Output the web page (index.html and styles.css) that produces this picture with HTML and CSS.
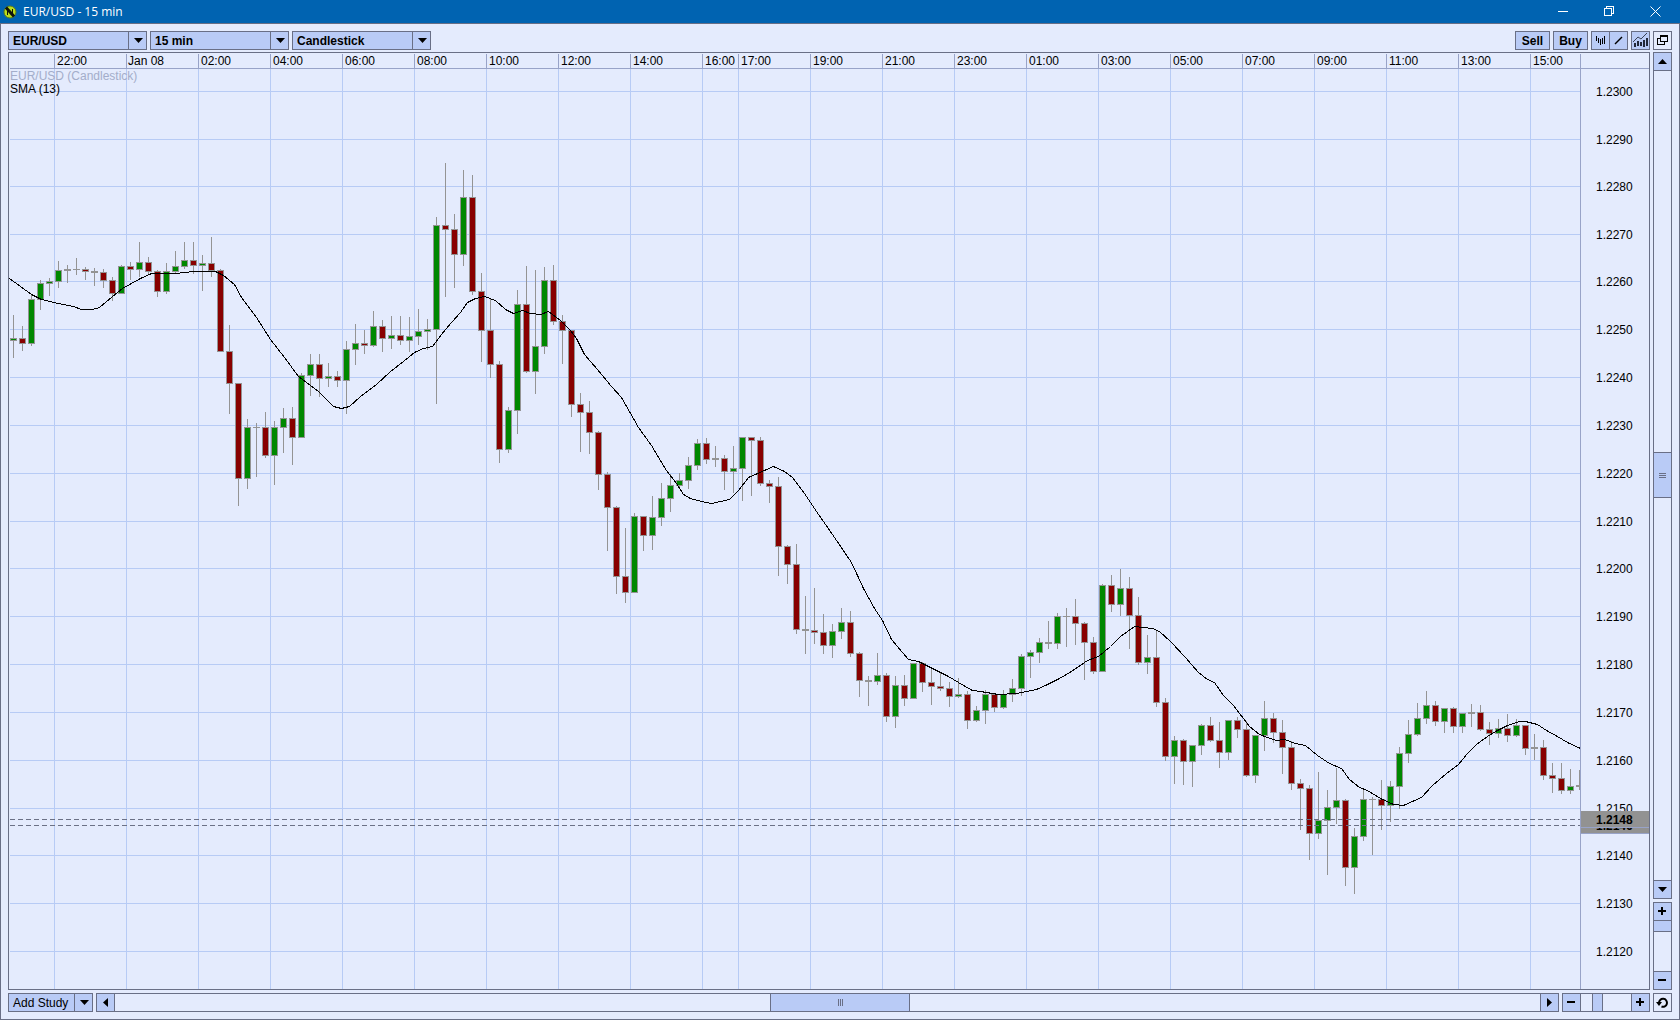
FILE: index.html
```html
<!DOCTYPE html>
<html lang="en">
<head>
    <meta charset="UTF-8">
    <meta name="viewport" content="width=device-width, initial-scale=1.0">
    <title>EUR/USD - 15 min</title>
    <link rel="stylesheet" href="styles.css">
</head>
<body>
    <header class="titlebar">
        <svg class="logo" width="14" height="14" viewBox="0 0 14 14">
            <circle cx="7" cy="7" r="6" fill="#b9dc1c" stroke="#5c7a1e"/>
            <path d="M4.500 10V4M9.500 10V4" fill="none" stroke="#10140a"/>
            <path d="M3 2.500l8 9" fill="none" stroke="#10140a" stroke-width="3"/>
        </svg>
        <h1>EUR/USD - 15 min</h1>
        <div class="window-controls">
            <button aria-label="Minimize"><svg width="11" height="11"><path d="M0 5.500h10"/></svg></button>
            <button aria-label="Restore"><svg width="11" height="11"><path d="M.5 2.500h7v7h-7zM2.500 2.500v-2h7v7h-2"/></svg></button>
            <button aria-label="Close"><svg width="11" height="11"><path class="smooth" d="M.5.5l10 10M10.500.5l-10 10"/></svg></button>
        </div>
    </header>

    <main class="window">
        <div class="toolbar">
            <div class="picker">
                <select aria-label="Instrument"><option>EUR/USD</option><option>GBP/USD</option></select>
                <span class="arrow"><svg width="9" height="5"><path d="M0 0h9L4.500 5z"/></svg></span>
            </div>
            <div class="picker">
                <select aria-label="Period"><option>15 min</option><option>1 hour</option></select>
                <span class="arrow"><svg width="9" height="5"><path d="M0 0h9L4.500 5z"/></svg></span>
            </div>
            <div class="picker">
                <select aria-label="Chart type"><option>Candlestick</option><option>Line</option></select>
                <span class="arrow"><svg width="9" height="5"><path d="M0 0h9L4.500 5z"/></svg></span>
            </div>
            <div class="actions">
                <button class="btn trade">Sell</button>
                <button class="btn trade">Buy</button>
                <div class="pair">
                    <button class="btn icon" aria-label="Bars"><svg width="17" height="17"><path class="line" d="M4.500 4v5M6.500 6v5M8.500 7v6M10.500 6v6M12.500 4v8"/></svg></button>
                    <button class="btn icon" aria-label="Draw line"><svg width="17" height="17"><path d="M5 12l7-7" stroke="#000" stroke-width="1.500"/></svg></button>
                </div>
                <button class="btn icon" aria-label="Indicators">
                    <svg width="17" height="17">
                        <path d="M1 10l5-5 3 2 6-6" fill="none" stroke="#3a4256"/>
                        <path d="M3 11v4M6 9v5M9 10v4M12 8v7M15 6v8" stroke="#222838" stroke-width="2"/>
                    </svg>
                </button>
                <button class="btn icon plain" aria-label="Pop out"><svg width="17" height="17"><path class="line" d="M6.500 3.500h7v6h-7zM6.500 6.500h-3v6h7v-3M6 4.500h8"/></svg></button>
            </div>
        </div>

        <div class="workspace">
            <div class="chart"><svg id="chart" role="img" aria-label="EUR/USD candlestick chart with SMA (13)"></svg></div>
            <div class="side">
                <div class="scroll vertical">
                    <button aria-label="Scroll up"><svg width="9" height="5"><path d="M0 5h9L4.500 0z"/></svg></button>
                    <div class="track"><div class="thumb"><svg width="7" height="5"><path class="grip" d="M0 .5h7M0 2.500h7M0 4.500h7"/></svg></div></div>
                    <button aria-label="Scroll down"><svg width="9" height="5"><path d="M0 0h9L4.500 5z"/></svg></button>
                </div>
                <div class="zoom vertical">
                    <button aria-label="Zoom in prices"><svg width="9" height="9"><path d="M3 0h2v3h3v2H5v3H3V5H0V3h3z"/></svg></button>
                    <input type="range" aria-label="Price zoom" min="0" max="100" value="100">
                    <button aria-label="Zoom out prices"><svg width="9" height="9"><path d="M0 3h8v2H0z"/></svg></button>
                </div>
            </div>
            <div class="bottom">
                <button class="btn study"><span>Add Study</span><span class="arrow"><svg width="9" height="5"><path d="M0 0h9L4.500 5z"/></svg></span></button>
                <div class="scroll horizontal">
                    <button aria-label="Scroll left"><svg width="5" height="9"><path d="M5 0v9L0 4.500z"/></svg></button>
                    <div class="track"><div class="thumb"><svg width="5" height="7"><path class="grip" d="M.5 0v7M2.500 0v7M4.500 0v7"/></svg></div></div>
                    <button aria-label="Scroll right"><svg width="5" height="9"><path d="M0 0v9L5 4.500z"/></svg></button>
                </div>
                <div class="zoom horizontal">
                    <button aria-label="Zoom out time"><svg width="9" height="9"><path d="M0 3h8v2H0z"/></svg></button>
                    <input type="range" aria-label="Time zoom" min="0" max="100" value="28">
                    <button aria-label="Zoom in time"><svg width="9" height="9"><path d="M3 0h2v3h3v2H5v3H3V5H0V3h3z"/></svg></button>
                </div>
            </div>
            <button class="btn icon plain" aria-label="Reset zoom">
                <svg width="17" height="17">
                    <path d="M5 9a4 4 0 1 1 2.500 3.500" fill="none" stroke="#000" stroke-width="2"/>
                    <path d="M2 8h6l-3 4z"/>
                </svg>
            </button>
        </div>
    </main>

    <script src="chart.js"></script>
</body>
</html>
```

FILE: styles.css
```css
:root {
    --bg: #e4ebfd;
    --fill: #b9cbf6;
    --edge: #696f86;
    --grid: #b7cbf5;
    --axis: #98a3c8;
}

* {
    box-sizing: border-box;
}

body {
    margin: 0;
    height: 100vh;
    display: flex;
    flex-direction: column;
    background: var(--bg);
    color: #000;
    font-family: "Liberation Sans", Arial, sans-serif;
    font-size: 12px;
    overflow: hidden;
}

button,
select {
    font: inherit;
    color: inherit;
    margin: 0;
    padding: 0;
    border: 0;
    border-radius: 0;
    background: var(--fill);
}

svg {
    display: block;
    flex: none;
}

/* title bar */
.titlebar {
    display: flex;
    align-items: center;
    height: 23px;
    padding: 0 2px 0 3px;
    background: #0063b1;
    color: #fff;
}

.titlebar h1 {
    margin: 0 0 0 6px;
    font: 12px/16px "Open Sans", sans-serif;
}

.window-controls {
    display: flex;
    margin-left: auto;
    height: 20px;
}

.window-controls button {
    display: flex;
    align-items: center;
    justify-content: center;
    width: 46px;
    background: none;
}

.window-controls path {
    fill: none;
    stroke: #fff;
    shape-rendering: crispEdges;
}

.window-controls .smooth {
    shape-rendering: auto;
}

.window {
    flex: 1;
    min-height: 0;
    display: flex;
    flex-direction: column;
    gap: 2px;
    padding: 7px;
    border: 1px solid var(--edge);
}

/* toolbar */
.toolbar,
.actions {
    display: flex;
    gap: 3px;
}

.actions {
    margin-left: auto;
}

.picker {
    display: grid;
    width: 139px;
    height: 19px;
    border: 1px solid var(--edge);
}

.picker select,
.picker .arrow {
    grid-area: 1 / 1;
}

.picker select {
    appearance: none;
    padding-left: 4px;
    font-weight: bold;
}

.arrow {
    display: flex;
    align-items: center;
    justify-content: center;
    width: 18px;
    padding-left: 1px;
    border-left: 1px solid var(--edge);
    pointer-events: none;
}

.picker .arrow {
    justify-self: end;
}

.btn {
    display: flex;
    align-items: center;
    justify-content: center;
    height: 19px;
    border: 1px solid var(--edge);
}

.trade {
    width: 35px;
    font-weight: bold;
}

.icon {
    width: 19px;
}

.plain {
    background: var(--bg);
}

.pair {
    display: flex;
}

.pair .btn + .btn {
    margin-left: -1px;
}

.line {
    fill: none;
    stroke: #000;
    shape-rendering: crispEdges;
}

/* chart and its scrollbars */
.workspace {
    flex: 1;
    min-height: 0;
    display: grid;
    grid-template-columns: minmax(0, 1fr) 19px;
    grid-template-rows: minmax(0, 1fr) 19px;
    gap: 3px;
}

.chart {
    border: 1px solid var(--edge);
    overflow: hidden;
}

.chart svg {
    width: 100%;
    height: 100%;
}

.side {
    display: flex;
    flex-direction: column;
    gap: 3px;
}

.bottom {
    display: flex;
    gap: 3px;
}

.study {
    width: 85px;
    justify-content: space-between;
    padding-left: 4px;
}

.study .arrow {
    height: 17px;
}

.scroll,
.zoom {
    display: flex;
    border: 1px solid var(--edge);
}

.vertical {
    flex-direction: column;
}

.scroll {
    flex: 1;
}

.scroll button,
.zoom button {
    display: flex;
    flex: none;
    align-items: center;
    justify-content: center;
    width: 18px;
    height: 17px;
}

.vertical button {
    width: 17px;
    height: 18px;
}

.vertical button:first-child {
    border-bottom: 1px solid var(--edge);
}

.vertical button:last-child {
    border-top: 1px solid var(--edge);
}

.horizontal button:first-child {
    border-right: 1px solid var(--edge);
}

.horizontal button:last-child {
    border-left: 1px solid var(--edge);
}

.track {
    flex: 1;
    display: grid;
}

.vertical .track {
    grid-template-rows: 381fr 46fr 382fr;
}

.horizontal .track {
    grid-template-columns: 655fr 140fr 630fr;
}

.thumb {
    display: flex;
    align-items: center;
    justify-content: center;
    background: var(--fill);
}

.vertical .thumb {
    grid-row: 2;
    border: solid var(--edge);
    border-width: 1px 0;
}

.horizontal .thumb {
    grid-column: 2;
    border: solid var(--edge);
    border-width: 0 1px;
}

.grip {
    stroke: var(--edge);
    shape-rendering: crispEdges;
}

.zoom input {
    appearance: none;
    margin: 0;
    width: 50px;
    height: 17px;
    background: none;
}

.zoom.vertical input {
    writing-mode: vertical-lr;
    direction: rtl;
    width: 17px;
    height: 50px;
}

.zoom input::-webkit-slider-thumb {
    appearance: none;
    width: 11px;
    height: 17px;
    background: var(--fill);
    border: solid var(--edge);
    border-width: 0 1px;
}

.zoom.vertical input::-webkit-slider-thumb {
    width: 17px;
    height: 11px;
    border-width: 0 0 1px;
}

/* chart drawing */
#chart line,
#chart rect,
#chart polyline {
    shape-rendering: crispEdges;
}

#chart .grid {
    stroke: var(--grid);
}

#chart .axis {
    stroke: var(--axis);
}

#chart .wick {
    stroke: #949494;
}

#chart .body {
    stroke: #949494;
}

#chart .up {
    fill: #008800;
}

#chart .down {
    fill: #880000;
}

#chart .sma {
    fill: none;
    stroke: #000;
}

#chart .quote {
    stroke: #6b7186;
    stroke-dasharray: 5 3;
}

#chart .tag {
    fill: #929292;
}

#chart .muted {
    fill: #a3adca;
}

#chart .strong {
    font-weight: bold;
}
```

FILE: chart.js
```js
// high, body top, body bottom, low, colour (g up, r down, d unchanged)
// levels run downwards, BASE_TOP is the upper edge of the plot
const candles = `
315 338 340 357 g|326 338 343 350 r|294 299 343 345 g|280 283 299 309 g|278 281 283 295 g|261 270 281 287 g
265 269 270 282 d|258 269 269 274 d|267 269 271 279 r|268 271 272 285 d|269 272 280 287 r|277 280 293 300 r
265 266 293 293 g|262 266 269 279 r|242 262 269 276 g|257 262 271 274 r|270 271 291 296 r|263 271 291 293 g
251 266 271 272 g|242 260 266 268 g|242 260 265 273 r|255 263 265 290 g|237 263 270 276 r|269 270 351 351 r
325 351 383 413 r|383 383 478 505 r|419 427 478 488 g|423 427 427 476 d|412 427 455 457 r|421 427 455 484 g
408 418 427 452 g|407 418 437 464 r|373 375 437 437 g|354 364 375 395 g|354 364 378 396 r|363 376 378 386 g
371 376 380 386 r|341 349 380 413 g|324 343 349 364 g|330 343 345 353 r|311 326 345 346 g|320 326 338 351 r
316 335 338 348 g|316 335 340 344 r|317 336 340 351 g|309 331 336 344 g|319 329 331 349 g|217 225 329 403 g
163 225 229 296 r|214 229 254 287 r|170 197 254 265 g|175 197 291 294 r|273 291 330 361 r|298 330 364 377 r
361 364 449 462 r|407 410 449 452 g|290 304 410 433 g|266 304 371 372 r|270 346 371 393 g|267 280 346 353 g
265 280 321 324 r|315 321 330 363 r|330 330 404 416 r|393 404 412 451 r|401 412 432 453 r|431 432 474 489 r
472 474 507 550 r|506 507 576 593 r|528 576 592 602 r|513 516 592 592 g|516 516 535 550 r|496 517 535 549 g
483 498 517 525 g|474 485 498 511 g|473 480 485 488 g|457 465 480 488 g|439 443 465 469 g|438 443 459 463 r
446 458 459 466 d|455 458 471 489 r|446 468 471 492 g|437 437 468 500 g|437 437 440 495 r|437 440 483 485 r
480 483 486 502 r|477 486 546 575 r|545 546 564 583 r|544 564 629 633 r|596 629 630 653 d|588 630 632 643 r
614 632 645 653 r|624 631 645 657 g|608 622 631 638 g|611 622 653 656 r|652 653 680 696 r|676 680 681 705 d
653 675 681 684 g|673 675 716 721 r|676 685 716 727 g|675 685 698 705 r|663 663 698 698 g|662 663 682 691 r
667 682 686 704 r|673 686 688 690 r|682 688 696 706 r|678 694 696 697 g|691 694 720 728 r|706 710 720 721 g
690 694 710 723 g|694 694 707 711 r|690 694 707 708 g|679 688 694 701 g|654 656 688 695 g|650 652 656 677 g
638 642 652 662 g|621 642 643 648 d|613 616 643 648 g|608 616 616 646 d|599 616 623 644 r|622 623 642 679 r
637 642 671 673 r|584 585 671 671 g|575 585 604 611 r|569 588 604 615 g|577 588 615 648 r|597 615 662 664 r
635 657 662 673 g|630 657 702 706 r|698 702 756 760 r|736 740 756 783 g|739 740 761 784 r|745 745 761 786 g
724 725 745 754 g|717 725 740 741 r|722 740 752 767 r|720 720 752 759 g|717 720 729 737 r|721 729 775 776 r
735 735 775 782 g|701 718 735 750 g|713 718 732 742 r|720 732 747 773 r|741 747 783 789 r|779 783 788 829 r
785 788 833 859 r|772 820 833 838 g|790 807 820 874 g|768 800 807 823 g|799 800 867 885 r|828 836 867 893 g
789 799 836 840 g|797 799 799 854 d|780 799 805 829 r|781 786 805 821 g|747 753 786 808 g|720 734 753 762 g
703 718 734 735 g|691 705 718 723 g|701 705 721 725 r|708 708 721 732 g|707 708 726 732 r|713 713 726 732 g
704 712 713 726 d|705 712 729 730 r|722 729 733 744 r|719 728 733 737 g|714 728 735 741 r|719 725 735 736 g
725 725 748 754 r|734 747 748 759 d|740 747 775 779 r|763 775 778 792 r|763 778 790 793 r|769 786 790 793 g
770 785 786 789 d`.trim().split(/[|\n]/).map(row => row.split(' '));

const sma = `9,278 20,286 31,294 41,299 58,303 73,306 81,309 92,309 99,307 112,296 122,288 140,278 151,273
175,273 193,271 215,271 223,275 234,284 241,297 256,317 270,339 284,357 298,376 318,391 333,406 341,408 349,406
360,396 376,384 390,371 403,361 414,352 423,348 432,346 441,334 451,322 460,312 467,302 475,298 484,296 495,300
505,309 513,313 522,310 530,313 540,314 548,311 560,320 570,330 576,338 584,354 597,369 611,386 621,397 638,427
651,445 666,470 676,483 683,494 690,498 701,501 711,503 729,499 738,490 748,477 764,470 773,466 784,471 792,477
804,493 816,511 832,534 851,562 863,588 874,608 882,620 891,639 908,659 918,661 930,667 948,676 963,685 972,690
980,691 998,694 1016,693 1026,691 1036,689 1045,685 1059,678 1071,671 1087,660 1098,656 1110,646 1120,636
1134,626 1143,627 1152,628 1159,631 1170,641 1185,657 1198,672 1207,679 1214,682 1223,695 1233,705 1249,726
1259,734 1267,737 1276,740 1284,739 1295,743 1305,745 1317,755 1329,763 1341,768 1349,779 1359,787 1367,790
1380,798 1393,804 1403,805 1421,797 1432,785 1446,773 1458,764 1467,753 1476,744 1487,736 1495,731 1507,725
1519,721 1525,721 1537,724 1546,730 1557,736 1567,742 1580,748`.split(/\s+/).map(p => p.split(','));

const times = [
    [54, '22:00'], [126, 'Jan 08'], [198, '02:00'], [270, '04:00'], [342, '06:00'], [414, '08:00'],
    [486, '10:00'], [558, '12:00'], [630, '14:00'], [702, '16:00'], [738, '17:00'], [810, '19:00'],
    [882, '21:00'], [954, '23:00'], [1026, '01:00'], [1098, '03:00'], [1170, '05:00'], [1242, '07:00'],
    [1314, '09:00'], [1386, '11:00'], [1458, '13:00'], [1530, '15:00']
];

// one level every ten pips, from 1.2300 down
const prices = [91, 139, 186, 234, 281, 329, 377, 425, 473, 521, 568, 616, 664, 712, 760, 808, 855, 903, 951];

const BASE_LEFT = 9;
const BASE_TOP = 53;
const BASE_HEIGHT = 936;
const AXIS_WIDTH = 69;
const HEADER = 15;

const svg = document.getElementById('chart');

function line(cls, x1, y1, x2, y2) {
    return `<line class="${cls}" x1="${x1 + 0.5}" y1="${y1 + 0.5}" x2="${x2 + 0.5}" y2="${y2 + 0.5}"/>`;
}

function text(cls, x, y, value) {
    return `<text class="${cls}" x="${x}" y="${y}">${value}</text>`;
}

function draw() {
    const width = svg.parentNode.clientWidth;
    const height = svg.parentNode.clientHeight;
    const right = width - AXIS_WIDTH;
    const toX = x => x - BASE_LEFT;
    const toY = y => Math.floor((y - BASE_TOP) * height / BASE_HEIGHT);
    let labels = '';
    let plot = '';

    // price grid
    prices.forEach((level, i) => {
        const y = toY(level);
        plot += line('grid', 0, y, right, y);
        labels += text('', right + 16, y + 5, (1.23 - i * 0.001).toFixed(4));
    });

    // time grid
    times.forEach(([at, label]) => {
        const x = toX(at);
        plot += line('grid', x, HEADER, x, height);
        plot += line('axis', x, 0, x, HEADER);
        plot += text('', x + (label === 'Jan 08' ? 2 : 3), 12, label);
    });

    candles.forEach(([high, top, bottom, low, color], i) => {
        const x = toX(13 + 9 * i);
        const y1 = toY(top);
        const y2 = toY(bottom);
        plot += `<line class="wick" x1="${x + 0.5}" y1="${toY(high)}" x2="${x + 0.5}" y2="${toY(low) + 1}"/>`;
        if (color === 'd') {
            plot += `<rect fill="#949494" x="${x - 3}" y="${y1}" width="7" height="${y2 - y1 + 1}"/>`;
        } else {
            plot += `<rect class="body ${color === 'g' ? 'up' : 'down'}" x="${x - 2.5}" y="${y1 + 0.5}" width="6" height="${y2 - y1}"/>`;
        }
    });

    const points = sma.map(([x, y]) => `${toX(x) + 0.5},${toY(y) + 0.5}`).join(' ');
    plot += `<polyline class="sma" points="${points}"/>`;

    // bid and ask
    const ask = toY(819);
    const bid = toY(825);
    plot += line('quote', 0, ask, right, ask) + line('quote', 0, bid, right, bid);
    labels += `<rect class="tag" x="${right + 1}" y="${bid - 8}" width="68" height="16"/>`;
    labels += text('strong', right + 16, bid + 5, '1.2146');
    labels += `<rect class="tag" x="${right + 1}" y="${ask - 8}" width="68" height="16"/>`;
    labels += line('axis', right, ask + 8, width, ask + 8) + line('axis', right, bid + 8, width, bid + 8);
    labels += text('strong', right + 16, ask + 5, '1.2148');

    svg.innerHTML = `<clipPath id="plot"><rect width="${right}" height="${height}"/></clipPath>
        <g clip-path="url(#plot)">${plot}
        ${text('muted', 1, 27, 'EUR/USD (Candlestick)')}
        ${text('', 1, 40, 'SMA (13)')}</g>
        ${line('axis', 0, HEADER, width, HEADER)}
        ${line('axis', right, 0, right, height)}
        ${labels}`;
}

draw();
window.addEventListener('resize', draw);
```
